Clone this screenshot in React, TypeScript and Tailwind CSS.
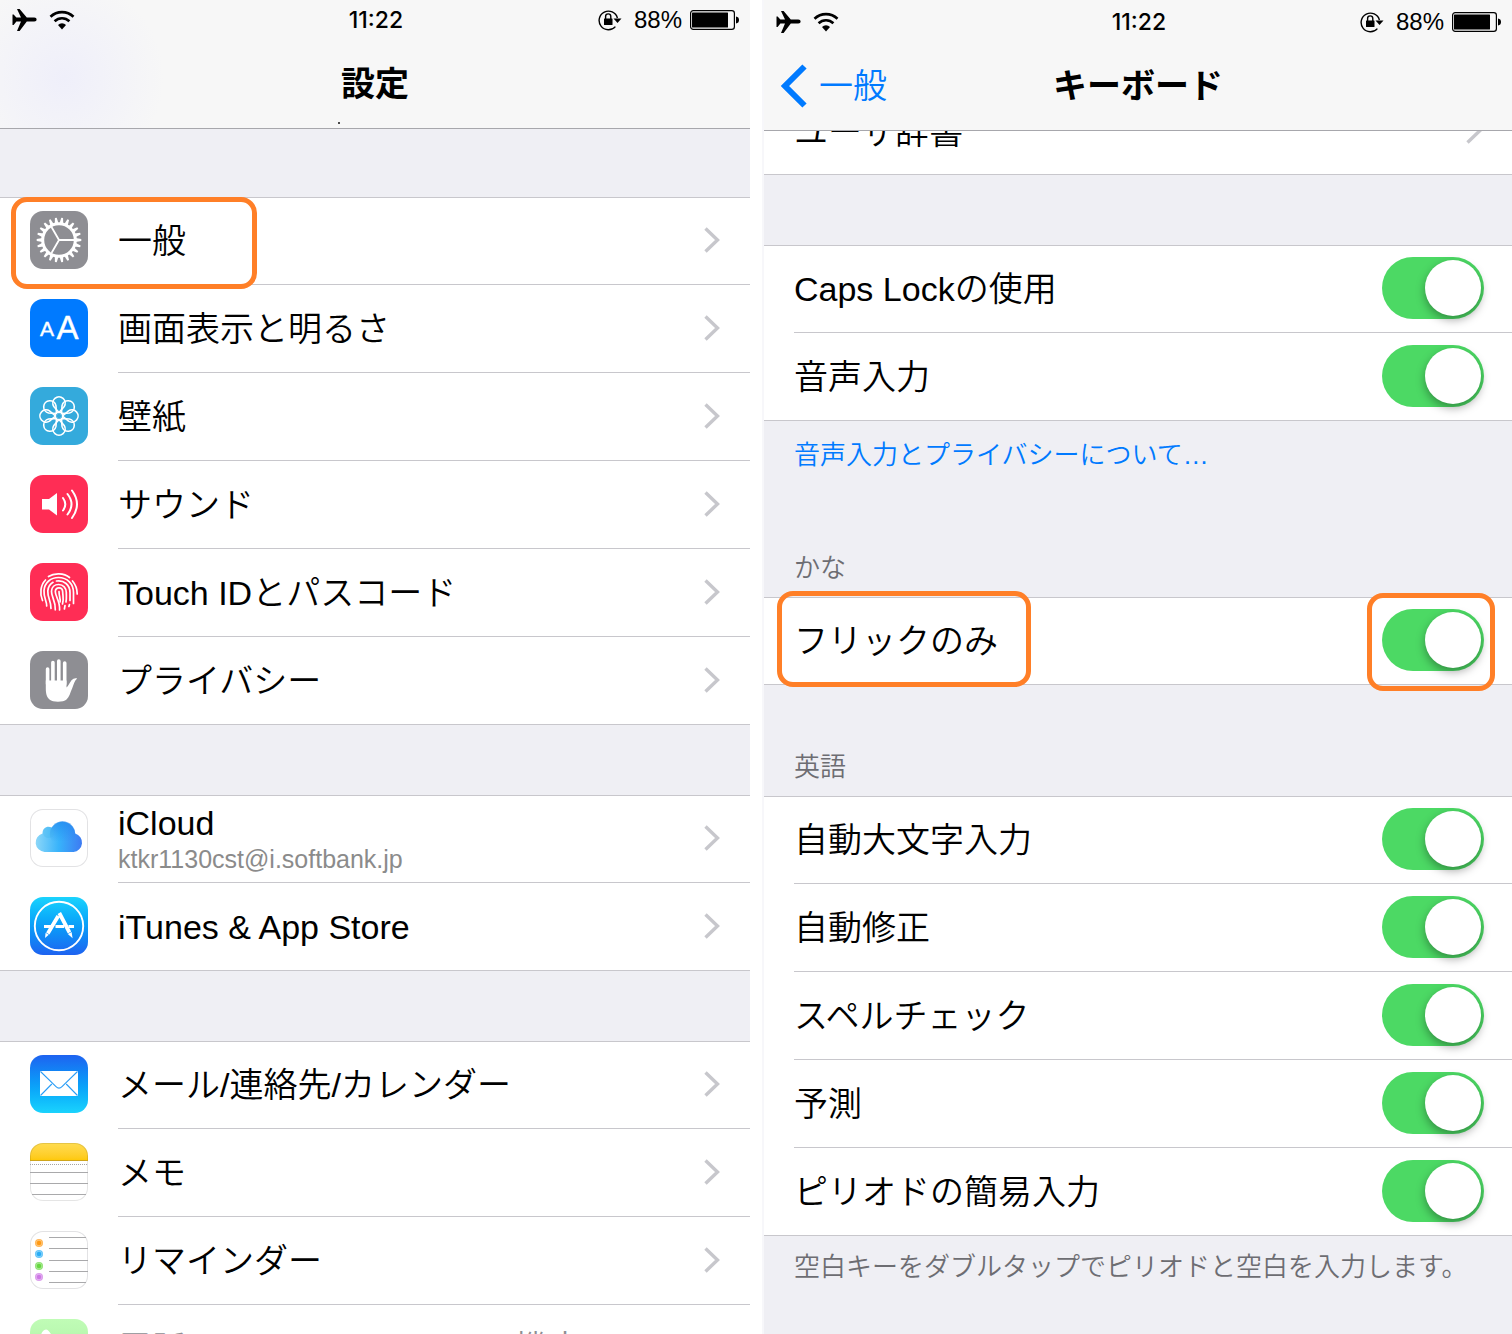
import React, { useId } from 'react'

interface SettingsRow {
  label: string
  icon: React.ReactNode
  detail?: string
  value?: string
  highlighted?: boolean
  disabled?: boolean
}

const AirplaneIcon = () => (
  <svg width="25" height="24" viewBox="0 0 25 24" aria-hidden="true">
    <path
      d="M5 1h2.6l7.2 8.6h7.4c1.6 0 2.4.9 2.4 2s-.8 2-2.4 2h-7.4L7.6 23H5l4-9.4H4.4L1.6 17H.5V6.5h1.1L4.4 9.6H9z"
      fill="#000"
    />
  </svg>
)

const WifiIcon = () => (
  <svg width="26" height="20" viewBox="0 0 26 20" aria-hidden="true">
    <g fill="none" stroke="#000" strokeWidth="2.6">
      <path d="M1.5 6.8a16.5 16.5 0 0 1 23 0" />
      <path d="M5.6 11.2a10.6 10.6 0 0 1 14.8 0" />
    </g>
    <path d="M13 19.500l-4-4.600a5.600 5.600 0 0 1 8 0z" fill="#000" />
  </svg>
)

const LockIcon = () => (
  <svg width="24" height="22" viewBox="0 0 24 22" aria-hidden="true">
    <path
      d="M17.4 17.6A9.3 9.3 0 1 1 19.4 9"
      fill="none"
      stroke="#000"
      strokeWidth="1.4"
    />
    <path d="M15.5 9.5h8l-4 4.5z" fill="#000" />
    <rect x="6" y="9.5" width="8.5" height="6.5" rx="0.5" fill="#000" />
    <path
      d="M7.6 10V7.500a2.600 2.600 0 0 1 5.200 0V10"
      fill="none"
      stroke="#000"
      strokeWidth="1.4"
    />
  </svg>
)

const BatteryIcon = () => (
  <svg width="50" height="20" viewBox="0 0 50 20" aria-hidden="true">
    <rect
      x="0.6"
      y="0.6"
      width="43.8"
      height="18.8"
      rx="2.6"
      fill="none"
      stroke="#000"
      strokeWidth="1.2"
    />
    <rect x="2" y="2.5" width="36" height="15" rx="0.5" fill="#000" />
    <path d="M46 6.5c2 .3 3 1.500 3 3.500s-1 3.200-3 3.500z" fill="#000" />
  </svg>
)

const Chevron = () => (
  <svg
    className="shrink-0"
    width="16"
    height="28"
    viewBox="0 0 16 28"
    aria-hidden="true"
  >
    <path
      d="M1.5 2.5L13.5 14 1.5 25.5"
      fill="none"
      stroke="#c7c7cc"
      strokeWidth="3.4"
    />
  </svg>
)

const GearIcon = () => (
  <svg width="58" height="58" viewBox="-29 -29 58 58" aria-hidden="true">
    <g fill="#fff">
      {Array.from({ length: 22 }, (_, i) => (
        <path
          key={i}
          d="M16.5-1.9L22.300-.9V.9L16.500 1.900z"
          transform={`rotate(${(i * 360) / 22})`}
        />
      ))}
    </g>
    <g fill="none" stroke="#fff">
      <circle r="16.3" strokeWidth="3" />
      <path d="M0 0H15M0 0L-7.5-13M0 0L-7.5 13" strokeWidth="1.8" />
    </g>
  </svg>
)

const DisplayIcon = () => (
  <svg width="58" height="58" viewBox="0 0 58 58" aria-hidden="true">
    <g
      fill="#fff"
      stroke="#fff"
      strokeWidth="0.4"
      fontFamily="'Liberation Sans', sans-serif"
    >
      <text x="10" y="37" fontSize="21">
        A
      </text>
      <text x="26.5" y="40" fontSize="33">
        A
      </text>
    </g>
  </svg>
)

const WallpaperIcon = () => (
  <svg width="58" height="58" viewBox="-29 -29 58 58" aria-hidden="true">
    <g fill="none" stroke="#fff" strokeWidth="1.6">
      {[0, 45, 90, 135, 180, 225, 270, 315].map((angle) => (
        <path
          key={angle}
          d="M0-3.500L-5.200-9.500A6.200 6.200 0 1 1 5.200-9.500z"
          transform={`rotate(${angle})`}
        />
      ))}
      <circle r="4" />
    </g>
  </svg>
)

const SoundIcon = () => (
  <svg width="58" height="58" viewBox="0 0 58 58" aria-hidden="true">
    <path d="M12 24h7l8-6v22.500L19 34.500h-7z" fill="#fff" />
    <g fill="none" stroke="#fff" strokeWidth="2" strokeLinecap="round">
      <path d="M33 23q4.600 6.200 0 12.500" />
      <path d="M37.500 19q8 10.200 0 20.500" />
      <path d="M42 15.500q10 13.700 0 27.500" />
    </g>
  </svg>
)

const TouchIdIcon = () => (
  <svg width="58" height="58" viewBox="0 0 58 58" aria-hidden="true">
    <g fill="none" stroke="#fff" strokeWidth="1.7" strokeLinecap="round">
      <path d="M18.5 13.5C24 9.800 34 9.800 39.500 14.500" />
      <path d="M12.5 37.500C9.500 31 10.500 22 15.500 17" />
      <path d="M42.5 18C46 22 47.200 26 47.200 31" />
      <path d="M16.7 43C17 38 13.500 35 14 27.500 14.600 19.500 21 14.500 28.500 14.500 37.500 14.500 43.500 21 43.500 29.500V40.500" />
      <path d="M21 45.5C21.200 38 17.500 35 17.800 28 18.100 24 20 21 23 19.300" />
      <path d="M26.5 18C34 16.800 40 22 40 29.500V37.500M39.500 41.500L38.900 43.500" />
      <path d="M25.3 46.8C25.800 38 21.300 34 21.500 28.300 21.700 24.500 24.500 21.500 28.700 21.500 33.300 21.500 36.300 25 36.300 29.500 36.300 33 36.700 35 36 39M35 42.500L34.400 46" />
      <path d="M29.6 47C30.200 38 25.300 33.500 25.300 28.500 25.300 23.600 32.600 23.600 32.700 29 32.800 33.500 34 35.500 32.500 41" />
      <path d="M29 28.5C29 33 30.600 35.500 30.100 39" />
    </g>
  </svg>
)

const HandIcon = () => (
  <svg width="58" height="58" viewBox="0 0 58 58" aria-hidden="true">
    <g stroke="#fff" strokeWidth="3.6" strokeLinecap="round">
      <path d="M17.6 18V33M22.9 11.500V33M28.800 10V33M34.700 12V33" />
    </g>
    <path
      d="M15.8 29.500H36.500V36.500C38.200 35.500 39.300 32 41.500 29.300 43.200 27.300 45.500 26.800 47.200 27.500 44.500 29.500 44 33 42.300 37 40 42 39.500 46 36.500 48.500 33.500 51.300 23 51.600 19.500 48.500 16 45.500 15.800 41 15.800 36z"
      fill="#fff"
    />
  </svg>
)

const CloudIcon = () => {
  const id = useId()
  return (
    <svg width="58" height="58" viewBox="0 0 58 58" aria-hidden="true">
      <defs>
        <linearGradient
          id={id}
          x1="5"
          y1="30"
          x2="53"
          y2="32"
          gradientUnits="userSpaceOnUse"
        >
          <stop offset="0" stopColor="#8fd8f8" />
          <stop offset="0.5" stopColor="#38b3fb" />
          <stop offset="1" stopColor="#3d78f2" />
        </linearGradient>
        <linearGradient id={`${id}-top`} x1="0" y1="0" x2="0" y2="1">
          <stop offset="0" stopColor="#2187ee" stopOpacity="0.7" />
          <stop offset="0.8" stopColor="#2187ee" stopOpacity="0" />
        </linearGradient>
      </defs>
      <path
        d="M14.5 43A9.500 9.500 0 0 1 12.500 24.400C12.600 18.500 17.500 16.500 21.700 18.600A12.800 12.800 0 0 1 45.200 24.600A9.400 9.400 0 0 1 43.500 43z"
        fill={`url(#${id})`}
      />
      <circle cx="32.6" cy="25" r="12.7" fill={`url(#${id}-top)`} />
      <circle cx="18.5" cy="23.5" r="5.5" fill="#3eb5ee" opacity="0.3" />
    </svg>
  )
}

const AppStoreIcon = () => (
  <svg width="58" height="58" viewBox="0 0 58 58" aria-hidden="true">
    <g fill="none" stroke="#fff">
      <circle cx="29" cy="29" r="24.2" strokeWidth="1.9" />
      <path d="M14 29.5H21M25.500 29.500H34M38.500 29.500H44" strokeWidth="2.8" />
      <path d="M28.2 19L17.800 36.500M29.300 16L39.500 35.500" strokeWidth="3.8" />
    </g>
    <g fill="#fff">
      <path d="M15.6 35.800l3.200 1.900L15 41z" />
      <path d="M37.8 37l3.800-2 1 6.200z" />
    </g>
  </svg>
)

const MailIcon = () => (
  <svg width="58" height="58" viewBox="0 0 58 58" aria-hidden="true">
    <rect x="10" y="16" width="38" height="25" rx="0.5" fill="#fff" />
    <g fill="none" stroke="#2b9df6" strokeWidth="1.1">
      <path d="M10.5 16.500L26 31.700q3 3 6 0L47.500 16.500" />
      <path d="M10.5 40.500L21.800 29M47.500 40.500L36.200 29" />
    </g>
  </svg>
)

const NotesIcon = () => (
  <svg width="58" height="58" viewBox="0 0 58 58" aria-hidden="true">
    <rect y="17" width="58" height="1" fill="#cfa51b" />
    <path d="M0 21.5H58" stroke="#a5a5a5" strokeDasharray="1 1" />
    <path d="M0 29.5H58M0 40.500H58M2 51.500H56" stroke="#a9a9ab" />
  </svg>
)

const RemindersIcon = () => (
  <svg width="58" height="58" viewBox="0 0 58 58" aria-hidden="true">
    <path
      d="M19 6.5H56M19 17.500H58M19 29.500H58M19 40.500H58M19 51.500H56"
      stroke="#a9a9ab"
    />
    {[
      ['#ff9a14', 12],
      ['#28adf6', 23],
      ['#66d740', 35],
      ['#cd77e5', 46],
    ].map(([color, y]) => (
      <g key={color} fill={String(color)}>
        <circle cx="9" cy={y} r="4" opacity="0.75" />
        <circle
          cx="9"
          cy={y}
          r="2.8"
          stroke="#fff"
          strokeOpacity="0.5"
          strokeWidth="0.7"
        />
      </g>
    ))}
  </svg>
)

const PhoneIcon = () => (
  <svg width="58" height="58" viewBox="0 0 58 58" aria-hidden="true">
    <path
      d="M11 17c0-3 2-6 5-6.500 2 0 5 4 6.500 7.500.5 2-3.500 4-3.500 6 2 6 8 12 14 14 2 0 4-4 6-3.500 3.500 1.500 8 4.500 8 6.500-.5 3-3.500 5.500-6.500 6C28 48 11 31 11 17z"
      fill="#fff"
    />
  </svg>
)

const groups: SettingsRow[][] = [
  [
    {
      label: '一般',
      icon: (
        <IconTile className="bg-[#8e8e93]">
          <GearIcon />
        </IconTile>
      ),
      highlighted: true,
    },
    {
      label: '画面表示と明るさ',
      icon: (
        <IconTile className="bg-[#007aff]">
          <DisplayIcon />
        </IconTile>
      ),
    },
    {
      label: '壁紙',
      icon: (
        <IconTile className="bg-[#34aadc]">
          <WallpaperIcon />
        </IconTile>
      ),
    },
    {
      label: 'サウンド',
      icon: (
        <IconTile className="bg-[#ff2d55]">
          <SoundIcon />
        </IconTile>
      ),
    },
    {
      label: 'Touch IDとパスコード',
      icon: (
        <IconTile className="bg-[#ff2d55]">
          <TouchIdIcon />
        </IconTile>
      ),
    },
    {
      label: 'プライバシー',
      icon: (
        <IconTile className="bg-[#8e8e93]">
          <HandIcon />
        </IconTile>
      ),
    },
  ],
  [
    {
      label: 'iCloud',
      detail: 'ktkr1130cst@i.softbank.jp',
      icon: (
        <IconTile className="bg-white inset-ring inset-ring-[#e2e2e4]">
          <CloudIcon />
        </IconTile>
      ),
    },
    {
      label: 'iTunes & App Store',
      icon: (
        <IconTile className="bg-linear-to-b from-[#1bd3fd] to-[#1e62f0]">
          <AppStoreIcon />
        </IconTile>
      ),
    },
  ],
  [
    {
      label: 'メール/連絡先/カレンダー',
      icon: (
        <IconTile className="bg-linear-to-b from-[#1e62f0] to-[#1bd3fd]">
          <MailIcon />
        </IconTile>
      ),
    },
    {
      label: 'メモ',
      icon: (
        <IconTile className="bg-linear-to-b from-[#ffdc4f] from-0% via-[#fec908] via-[17px] to-white to-[17px] inset-ring inset-ring-black/10">
          <NotesIcon />
        </IconTile>
      ),
    },
    {
      label: 'リマインダー',
      icon: (
        <IconTile className="bg-white inset-ring inset-ring-[#e2e2e4]">
          <RemindersIcon />
        </IconTile>
      ),
    },
    {
      label: '電話',
      value: '機内モード',
      disabled: true,
      icon: (
        <IconTile className="bg-linear-to-b from-[#c0fcb6] to-[#a8eda0]">
          <PhoneIcon />
        </IconTile>
      ),
    },
  ],
]

function IconTile({
  className,
  children,
}: {
  className: string
  children: React.ReactNode
}) {
  return (
    <span
      className={`block size-[58px] shrink-0 overflow-hidden rounded-[13px] ${className}`}
    >
      {children}
    </span>
  )
}

const StatusBar = () => (
  <div className="grid h-10 grid-cols-3 items-center pr-2.5 pl-3">
    <div className="flex items-center gap-3">
      <AirplaneIcon />
      <WifiIcon />
    </div>
    <time className="text-center font-['Inter'] text-[23px] font-medium">
      11:22
    </time>
    <div className="flex items-center justify-end gap-3">
      <LockIcon />
      <div className="flex items-center gap-2">
        <span className="text-2xl">88%</span>
        <BatteryIcon />
      </div>
    </div>
  </div>
)

const SettingsItem = ({ row }: { row: SettingsRow }) => (
  <li className="group relative border-[#c8c7cc] bg-white first:shadow-[inset_0_1px_0_#c8c7cc] last:border-b">
    <a href="#" className="flex h-22 gap-[30px] pl-[30px] group-last:h-[87px]">
      <span className="pt-3.5">{row.icon}</span>
      <span className="flex min-w-0 flex-1 items-center justify-between border-b border-[#c8c7cc] pr-[30px] pb-px group-last:border-b-0">
        <span
          className={
            row.disabled ? 'pt-0.5 text-[#8e8e93]' : 'pt-0.5 text-black'
          }
        >
          <span className="block">{row.label}</span>
          {row.detail && (
            <span className="block text-[25px] leading-8 text-[#8b8b8b]">
              {row.detail}
            </span>
          )}
        </span>
        <span className="flex items-center gap-5 text-[#8e8e93]">
          {row.value}
          <Chevron />
        </span>
      </span>
    </a>
    {row.highlighted && (
      <span className="pointer-events-none absolute top-0 left-[11px] z-10 h-[92px] w-[246px] rounded-2xl border-5 border-[#ff7f27]" />
    )}
  </li>
)

const SettingsScreen = () => (
  <section className="min-w-0 bg-[#efeff4]">
    <header className="relative h-[129px] border-b border-[#a7a7ac] bg-[radial-gradient(circle_at_64px_78px,#efeffa,#f7f7f7_100px)]">
      <StatusBar />
      <h1 className="pt-6 text-center font-bold">設定</h1>
      <span className="absolute bottom-1 left-[45%] size-0.5 bg-black/70" />
    </header>
    <div className="flex flex-col gap-[70px] pt-[68px]">
      {groups.map((rows) => (
        <ul key={rows[0].label}>
          {rows.map((row) => (
            <SettingsItem key={row.label} row={row} />
          ))}
        </ul>
      ))}
    </div>
  </section>
)

const ToggleItem = ({
  label,
  highlighted,
}: {
  label: string
  highlighted?: boolean
}) => (
  <li className="group relative border-[#c8c7cc] bg-white pl-[30px] first:shadow-[inset_0_1px_0_#c8c7cc] last:border-b">
    <label className="flex h-22 items-center justify-between border-b border-[#c8c7cc] pr-7 pb-px group-last:h-[87px] group-last:border-b-0">
      <span className="pt-0.5">{label}</span>
      <input
        type="checkbox"
        role="switch"
        defaultChecked
        className="h-[62px] w-[102px] shrink-0 appearance-none rounded-full bg-[#e5e5ea] p-[3px] before:block before:size-14 before:rounded-full before:bg-white before:shadow-[0_4px_10px_rgba(0,0,0,0.35)] checked:bg-[#4cd964] checked:before:ml-10"
      />
    </label>
    {highlighted && (
      <>
        <span className="pointer-events-none absolute -top-1.5 left-[13px] z-10 h-24 w-[254px] rounded-2xl border-5 border-[#ff7f27]" />
        <span className="pointer-events-none absolute -top-1 right-[17px] z-10 h-[98px] w-32 rounded-2xl border-5 border-[#ff7f27]" />
      </>
    )}
  </li>
)

const KeyboardScreen = () => (
  <section className="min-w-0 border-l-2 border-[#f7f7fa] bg-[#efeff4]">
    <header className="relative z-20 h-[131px] border-b border-[#a7a7ac] bg-[#f7f7f7] pt-0.5">
      <StatusBar />
      <div className="grid grid-cols-3 items-center pt-[22px]">
        <a href="#" className="flex items-center gap-3 pl-4 text-[#007aff]">
          <svg width="27" height="44" viewBox="0 0 27 44" aria-hidden="true">
            <path
              d="M24.500 2.500L5 22 24.500 41.500"
              fill="none"
              stroke="currentColor"
              strokeWidth="6"
            />
          </svg>
          一般
        </a>
        <h1 className="text-center font-bold whitespace-nowrap">キーボード</h1>
      </div>
    </header>
    <a
      href="#"
      className="-mt-11 flex h-22 items-center justify-between border-b border-[#c8c7cc] bg-white pr-[30px] pl-[30px]"
    >
      <span className="pt-0.5">ユーザ辞書</span>
      <Chevron />
    </a>
    <ul className="mt-[70px]">
      <ToggleItem label="Caps Lockの使用" />
      <ToggleItem label="音声入力" />
    </ul>
    <a
      href="#"
      className="block px-[30px] pt-3.5 text-[26px] leading-10 text-[#007aff]"
    >
      音声入力とプライバシーについて…
    </a>
    <h2 className="px-[30px] pt-[73px] pb-[9px] text-[26px] leading-10 text-[#6d6d72]">
      かな
    </h2>
    <ul>
      <ToggleItem label="フリックのみ" highlighted />
    </ul>
    <h2 className="px-[30px] pt-[62px] pb-[9px] text-[26px] leading-10 text-[#6d6d72]">
      英語
    </h2>
    <ul>
      <ToggleItem label="自動大文字入力" />
      <ToggleItem label="自動修正" />
      <ToggleItem label="スペルチェック" />
      <ToggleItem label="予測" />
      <ToggleItem label="ピリオドの簡易入力" />
    </ul>
    <p className="px-[30px] pt-[11px] text-[26px] leading-10 whitespace-nowrap text-[#6d6d72]">
      空白キーをダブルタップでピリオドと空白を入力します。
    </p>
  </section>
)

export default function App() {
  return (
    <main
      lang="ja"
      className="grid h-screen grid-cols-2 gap-3 overflow-hidden bg-white font-['Liberation_Sans','Noto_Sans_CJK_JP',sans-serif] text-[34px] leading-10 font-[350] text-black"
    >
      <SettingsScreen />
      <KeyboardScreen />
    </main>
  )
}
